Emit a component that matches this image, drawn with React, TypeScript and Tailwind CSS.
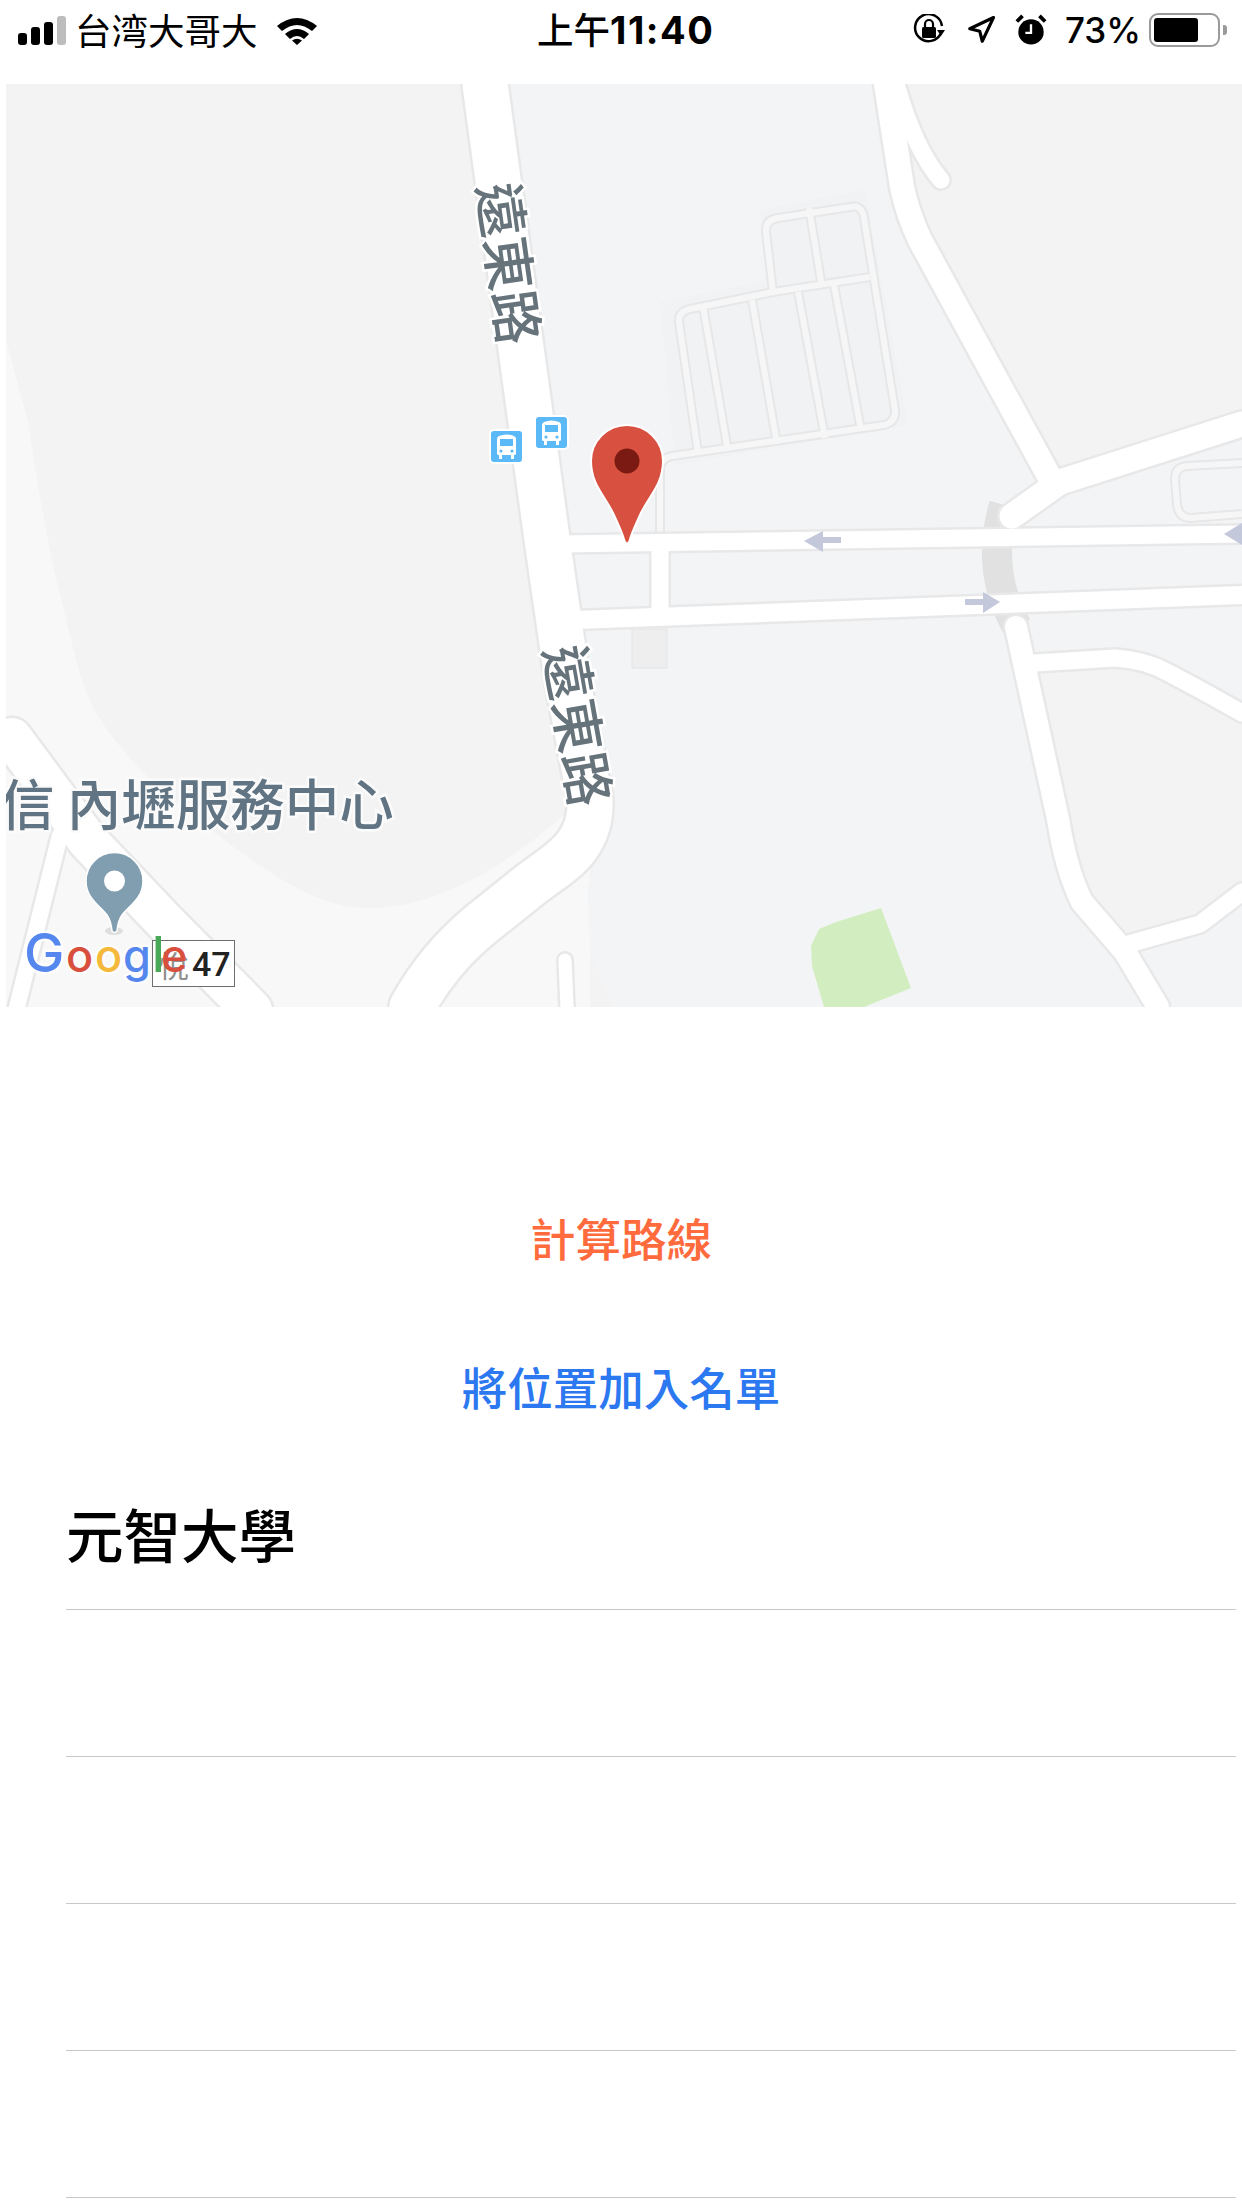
import { Navigation } from "lucide-react";

const cjk = '"Noto Sans CJK TC", "Noto Sans", sans-serif';

// casing first, then the white fill, same as a real map tile
const roads = [
  { d: "M485 84 L547 539 L567 677 L590 800 C592 850 555 865 530 885 L480 925 C450 950 430 975 412 1007", w: 45 },
  { d: "M886 84 L902 187 Q908 215 920 240 L1050 478", w: 24 },
  { d: "M896 84 Q915 150 941 180", w: 17 },
  { d: "M1242 424 L1060 482 L1012 516", w: 25 },
  { d: "M560 544 L1242 534", w: 17 },
  { d: "M575 620 L1242 595", w: 18 },
  { d: "M660 544 L660 610", w: 17 },
  { d: "M1016 627 L1058 819 Q1066 870 1082 902 L1125 952 L1158 1007", w: 22 },
  { d: "M1035 663 L1115 658 Q1145 660 1167 672 Q1205 692 1242 713", w: 17 },
  { d: "M1125 945 L1200 924 L1242 892", w: 17 },
  { d: "M565 960 L567 1007", w: 13 },
  { d: "M12 738 L88 841 L165 922 L252 1010", w: 40 },
  { d: "M60 835 L17 1007", w: 16 },
];

const lotRoads = [
  "M660 535 L660 470 Q660 458 672 456 L884 425 Q896 422 895 410 L864 218 Q862 204 850 207 L778 218 Q765 220 766 232 L773 292 L690 309 Q678 312 679 322 L698 453",
  "M773 292 L870 277",
  "M809 208 L822 287",
  "M703 306 L728 451",
  "M752 300 L777 444",
  "M798 292 L825 438",
  "M834 285 L861 430",
  "M1242 463 L1187 466 Q1175 467 1175 479 L1177 505 Q1179 518 1191 518 L1242 514",
];

function BusStop({ className }: { className: string }) {
  return (
    <div className={`absolute w-[35px] h-[35px] rounded-[5px] bg-[#5bb9f7] border-2 border-white flex items-center justify-center ${className}`}>
      <svg width="21" height="26" viewBox="0 0 21 26">
        <path d="M3 2 Q10.5 -1 18 2 Q20 3 20 5 L20 20 Q20 21 18 21 L18 25 L15 25 L15 21 L6 21 L6 25 L3 25 L3 21 Q1 21 1 20 L1 5 Q1 3 3 2 Z" fill="#fff" />
        <rect x="4" y="5" width="13" height="7" fill="#5bb9f7" />
        <circle cx="5" cy="17" r="1.6" fill="#5bb9f7" />
        <circle cx="16" cy="17" r="1.6" fill="#5bb9f7" />
      </svg>
    </div>
  );
}

function MapView() {
  return (
    <div className="relative ml-[6px] h-[923px] overflow-hidden bg-[#f3f3f3]">
      <svg width="1236" height="923" viewBox="6 84 1236 923" className="block">
        {/* land */}
        <path d="M6 340 L28 422 C40 500 50 560 63 605 C75 660 85 695 99 718 C130 765 170 800 211 830 C270 875 320 908 366 908 C420 910 500 880 590 790 L590 1007 L6 1007 Z" fill="#f8f8f8" />
        <path d="M507 84 L886 84 L1050 478 L1242 424 L1242 1007 L614 1007 L590 953 L588 887 L614 800 L567 539 Z" fill="#f3f4f6" />
        <path d="M886 84 L1242 84 L1242 424 L1060 482 L965 348 Z" fill="#f3f3f3" />
        <path d="M1050 663 L1115 658 Q1145 660 1167 672 L1242 713 L1242 892 L1200 924 L1125 945 L1082 902 Q1066 870 1058 819 L1035 663 Z" fill="#f3f3f3" />
        <path d="M660 302 L770 280 L760 210 L865 190 L908 425 L675 465 Z" fill="#f1f2f3" />
        <path d="M881 908 L911 988 L864 1007 L824 1007 L812 966 L811 946 L819 929 L836 922 Z" fill="#d2eec0" />
        <rect x="632" y="629" width="35" height="39" fill="#eeeeee" stroke="#e4e4e4" />
        <path d="M1004 505 Q985 570 1017 627" fill="none" stroke="#e1e1e1" strokeWidth="30" />

        {lotRoads.map((d) => (
          <path key={d + "c"} d={d} fill="none" stroke="#e6e7e8" strokeWidth="10" strokeLinejoin="round" />
        ))}
        {lotRoads.map((d) => (
          <path key={d} d={d} fill="none" stroke="#f6f6f7" strokeWidth="6" strokeLinejoin="round" />
        ))}
        {roads.map((r) => (
          <path key={r.d + "c"} d={r.d} fill="none" stroke="#e8e8e8" strokeWidth={r.w + 5} strokeLinecap="round" strokeLinejoin="round" />
        ))}
        {roads.map((r) => (
          <path key={r.d} d={r.d} fill="none" stroke="#fff" strokeWidth={r.w} strokeLinecap="round" strokeLinejoin="round" />
        ))}

        {/* one way arrows */}
        <path d="M804 541 L823 531 L823 537 L841 537 L841 543 L823 543 L823 552 Z" fill="#c3c8da" />
        <path d="M1000 602 L983 592 L983 599 L965 599 L965 605 L983 605 L983 613 Z" fill="#c3c8da" />
        <path d="M1224 534 L1242 523 L1242 545 Z" fill="#c3c8da" />

        {/* labels */}
        <g fontFamily={cjk} fontWeight="500" fontSize="54" fill="#67737b" stroke="#fff" strokeWidth="5" paintOrder="stroke" textAnchor="middle">
          <text x="512" y="263" dominantBaseline="central" transform="rotate(82 512 263)">遠東路</text>
          <text x="581" y="725" dominantBaseline="central" transform="rotate(80 581 725)">遠東路</text>
        </g>
        <text x="0" y="825" fontFamily={cjk} fontWeight="500" fontSize="54.5" fill="#607483" stroke="#fbfbfb" strokeWidth="5" paintOrder="stroke" xmlSpace="preserve">信 內壢服務中心</text>

        {/* grey place pin */}
        <ellipse cx="114" cy="931" rx="9" ry="4" fill="#000" opacity="0.1" />
        <path d="M117 931 C117.5 926 118 921 122 915 C130 905 143 898 143 881 A28.5 28.5 0 0 0 86 881 C86 898 99 905 107 915 C111 921 111.5 926 112 931 Q114.5 934 117 931 Z" fill="#819eb0" stroke="#fff" strokeWidth="1.5" />
        <circle cx="114.5" cy="881" r="10.5" fill="#fff" />

        {/* red pin */}
        <path d="M629.5 541 C631 535 634 528 640 515 C648 497 663 485 663 461 A36 36 0 0 0 591 461 C591 485 606 497 614 515 C620 528 623 535 624.5 541 Q627 546 629.5 541 Z" fill="#d85140" stroke="#fff" strokeWidth="2" />
        <circle cx="627" cy="461" r="12.5" fill="#7a1a12" />

        {/* box under the logo */}
        <rect x="152.5" y="940.5" width="82" height="46" fill="#fff" stroke="#6e6e6e" />
        <text x="159" y="977" fontFamily={cjk} fontSize="30" fill="#8f8f8f">悅</text>
        <text x="192" y="976" fontFamily="Roboto, sans-serif" fontWeight="500" fontSize="34" fill="#222">47</text>

        {/* logo */}
        <g fontFamily="Inter, sans-serif" fontWeight="500" stroke="#fff" strokeWidth="5" paintOrder="stroke" strokeOpacity="0.7">
          <text y="972">
            <tspan x="24" fontSize="54" fill="#5587ee">G</tspan>
            <tspan x="66" fontSize="45" fill="#d94f3d">o</tspan>
            <tspan x="95" fontSize="45" fill="#f4b93a">o</tspan>
            <tspan x="123" fontSize="45" fill="#5587ee">g</tspan>
          </text>
          <text y="972" strokeWidth="0">
            <tspan x="152" fontSize="50" fill="#4aa859">l</tspan>
            <tspan x="161" fontSize="45" fill="#d94f3d">e</tspan>
          </text>
        </g>
      </svg>
      <BusStop className="left-[528px] top-[331px]" />
      <BusStop className="left-[483px] top-[345px]" />
    </div>
  );
}

function StatusBar() {
  return (
    <div className="h-[60px] mb-[24px] flex items-center relative text-[36.5px] text-black" style={{ fontFamily: cjk }}>
      <div className="flex items-end gap-[4px] ml-[18px] h-[29px]">
        <div className="w-[9px] h-[12px] rounded-[3px] bg-black" />
        <div className="w-[9px] h-[18px] rounded-[3px] bg-black" />
        <div className="w-[9px] h-[23px] rounded-[3px] bg-black" />
        <div className="w-[9px] h-[29px] rounded-[3px] bg-[#bdbdbd]" />
      </div>
      <span className="ml-[9px] leading-none">台湾大哥大</span>
      <svg className="ml-[18px]" width="42" height="29" viewBox="0 0 42 29">
        <path d="M1 10 Q21 -6 41 10 L36 15 Q21 3 6 15 Z" fill="#000" />
        <path d="M9 18 Q21 8 33 18 L28 23 Q21 17 14 23 Z" fill="#000" />
        <path d="M16 24.5 Q21 21 26 24.5 L21 29 Z" fill="#000" />
      </svg>
      <span className="absolute left-[537px] leading-none font-medium">
        上午<span style={{ fontFamily: "Inter, sans-serif" }} className="font-bold text-[38px] tracking-[1.5px]">11:40</span>
      </span>
      <div className="ml-auto flex items-center mr-[15px]">
        <svg width="34" height="32" viewBox="0 0 34 32" fill="none">
          <path d="M29 19 A13.5 13.5 0 1 1 30 12" stroke="#000" strokeWidth="2.5" />
          <path d="M25 16 L33 16 L29 22 Z" fill="#000" />
          <rect x="10" y="13" width="14" height="11" rx="1.5" fill="#000" />
          <path d="M13 13 L13 10 A4 4 0 0 1 21 10 L21 13" stroke="#000" strokeWidth="2.2" />
        </svg>
        <Navigation className="ml-[20px] w-[30px] h-[30px] -scale-x-100 rotate-[90deg]" strokeWidth={2.5} />
        <svg className="ml-[19px]" width="32" height="32" viewBox="0 0 34 34">
          <circle cx="17" cy="19" r="13.5" fill="#000" />
          <path d="M17 11 L17 20 L11 20" stroke="#fff" strokeWidth="2.5" fill="none" />
          <path d="M2 8 L8 2 M32 8 L26 2" stroke="#000" strokeWidth="4" />
        </svg>
        <span className="ml-[18px] leading-none font-medium text-[35px]" style={{ fontFamily: "Inter, sans-serif" }}>73%</span>
        <div className="ml-[8px] w-[71px] h-[34px] rounded-[9px] border-[2.5px] border-[#9a9a9a] p-[3px]">
          <div className="w-[44px] h-full rounded-[3px] bg-black" />
        </div>
        <div className="ml-[3px] w-[4px] h-[10px] rounded-r-[3px] bg-[#9a9a9a]" />
      </div>
    </div>
  );
}

export default function App() {
  return (
    <div className="w-[1242px] h-[2208px] bg-white overflow-hidden" style={{ fontFamily: cjk }}>
      <StatusBar />
      <MapView />

      <div className="flex flex-col items-center pt-[203px] text-[45.5px] leading-[54px] font-medium">
        <button className="text-[#ff6b3d]">計算路線</button>
        <button className="mt-[95px] text-[#2b78f0]">將位置加入名單</button>
      </div>

      <div className="ml-[66px] mr-[6px] mt-[48px]">
        <div className="h-[149px] flex items-center pb-[3px] text-[57.5px] font-medium border-b-[1.5px] border-[#c8c8c8] text-black">
          元智大學
        </div>
        {[0, 1, 2, 3].map((i) => (
          <div key={i} className="h-[147px] border-b-[1.5px] border-[#c8c8c8]" />
        ))}
      </div>
    </div>
  );
}
